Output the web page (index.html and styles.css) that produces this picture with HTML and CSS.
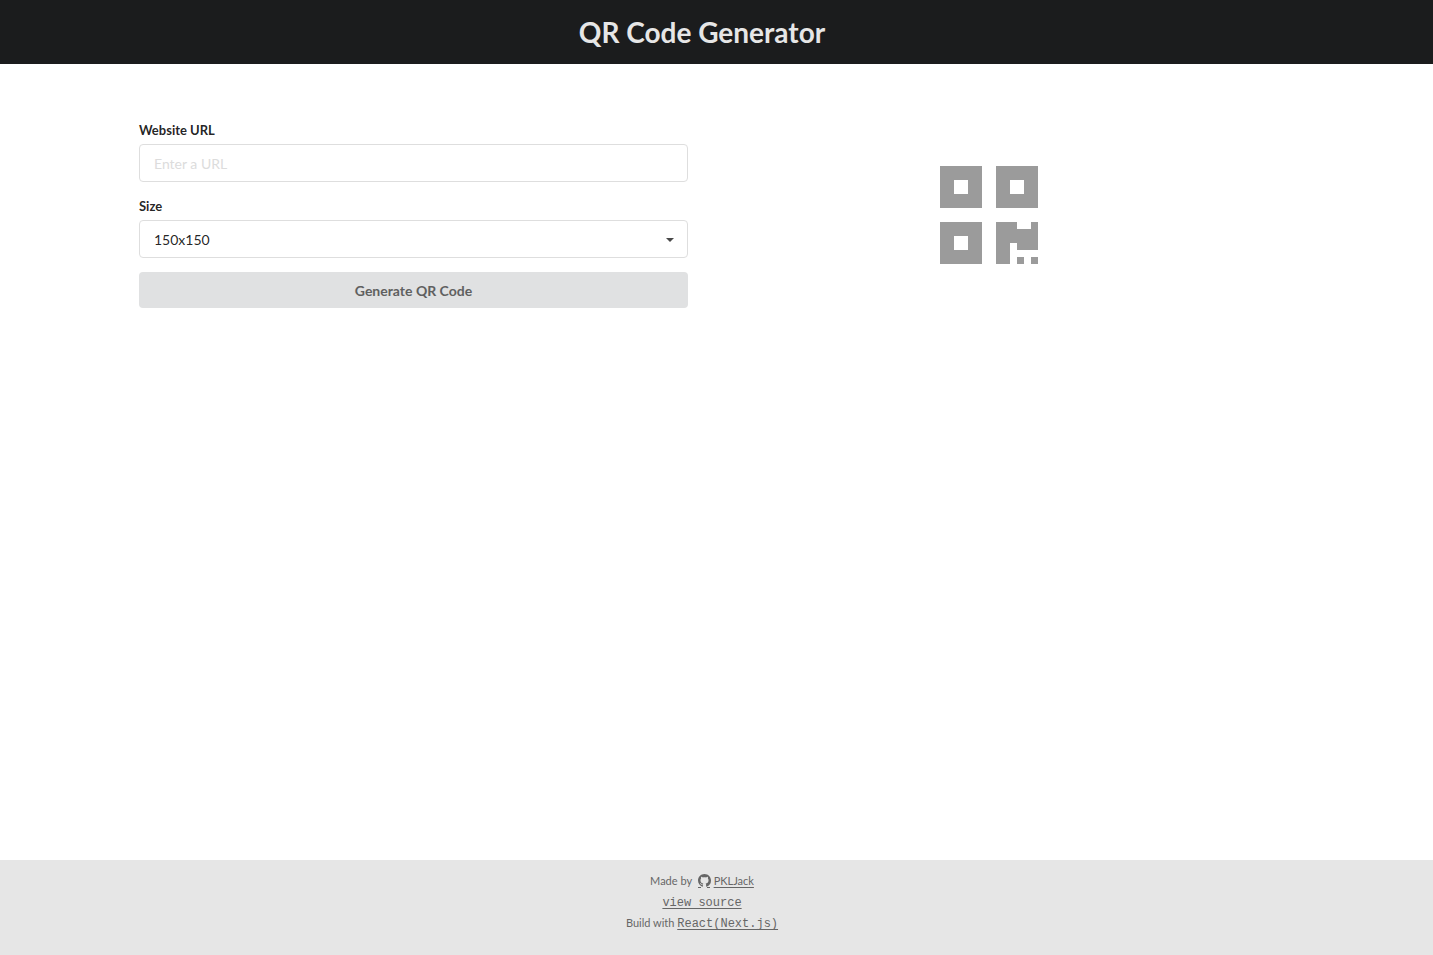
FILE: index.html
```html
<!DOCTYPE html>
<html lang="en">
<head>
<meta charset="utf-8">
<title>QR Code Generator</title>
<link rel="stylesheet" href="styles.css">
</head>
<body>
<header class="header"><h1 class="title">QR Code Generator</h1></header>
<main class="main">
  <form class="form">
    <div class="field">
      <label class="label" for="url">Website URL</label>
      <input class="control" id="url" type="text" placeholder="Enter a URL">
    </div>
    <div class="field">
      <label class="label" for="size">Size</label>
      <div class="select-box">
        <select class="control select" id="size">
          <option>150x150</option>
          <option>200x200</option>
          <option>300x300</option>
        </select>
        <svg class="caret" viewBox="0 0 8 4" aria-hidden="true"><path d="M0 0h8L4 4z"/></svg>
      </div>
    </div>
    <button class="button" type="button">Generate QR Code</button>
  </form>
  <div class="preview">
    <svg class="qr" viewBox="0 0 14 14" role="img" aria-label="QR code" shape-rendering="crispEdges">
      <path fill-rule="evenodd" d="M0 0h6v6H0zM2 2v2h2V2zM8 0h6v6H8zM10 2v2h2V2zM0 8h6v6H0zM2 10v2h2v-2zM8 8h3v1h2V8h1v4h-3v-1h-1v3H8zM11 13h1v1h-1zM13 13h1v1h-1z"/>
    </svg>
  </div>
</main>
<footer class="footer">
  <p class="line">Made by
    <a class="github" href="#github" aria-label="GitHub"><svg class="github-icon" viewBox="0 0 13 14" aria-hidden="true"><path d="M6.500 0C2.900 0 0 2.900 0 6.500c0 2.850 1.850 5.250 4.400 6.150.350.050.45-.15.45-.35v-1.500c-1.600.3-2.100-.4-2.300-.9-.2-.4-.4-.7-.7-.9.9-.1 1.300.6 1.600 1 .4.500.9.500 1.500.3.050-.4.200-.7.400-.9-1.400-.15-2.900-.7-2.900-3.150 0-.7.250-1.300.65-1.750-.2-.6-.1-1.200.1-1.700.6 0 1.200.3 1.750.65 1-.25 2.100-.25 3.100 0 .55-.35 1.150-.65 1.750-.65.2.5.3 1.100.1 1.700.4.450.65 1.050.65 1.750 0 2.450-1.500 3-2.900 3.150.250.200.450.600.450 1.200v1.700c0 .2.100.4.450.35A6.500 6.500 0 0 0 13 6.500C13 2.900 10.100 0 6.500 0zM0 13h3v1H0zM9 13h3v1H9z"/></svg></a><a class="link" href="#author">PKLJack</a></p>
  <p class="line"><a class="link mono" href="#source">view source</a></p>
  <p class="line">Build with <a class="link mono" href="#next">React(Next.js)</a></p>
</footer>
</body>
</html>
```
FILE: styles.css
```css
* { box-sizing: border-box; }
body {
  margin: 0;
  min-height: 100vh;
  display: flex;
  flex-direction: column;
  font-family: Lato, "Liberation Sans", sans-serif;
  font-size: 14px;
  line-height: 20px;
  color: rgba(0, 0, 0, .87);
  background: #fff;
}
.header {
  height: 64px;
  padding-right: 29px;
  display: flex;
  align-items: center;
  justify-content: center;
  background: #1b1c1d;
}
.title {
  margin: 0;
  font-size: 28px;
  line-height: 36px;
  font-weight: 700;
  color: #e6e6e6;
}
.main {
  flex: 1;
  display: grid;
  grid-template-columns: 1fr 1fr;
  grid-template-rows: min-content;
  column-gap: 28px;
  width: 100%;
  max-width: 1433px;
  margin: 0 auto;
  padding: 56px 168px 28px 139px;
}
.field { margin-bottom: 14px; }
.label {
  display: block;
  padding-bottom: 4px;
  font-size: 13px;
  line-height: 20px;
  font-weight: 700;
}
.control {
  display: block;
  width: 100%;
  height: 38px;
  margin: 0;
  padding: 0 14px;
  font: inherit;
  color: rgba(0, 0, 0, .87);
  background: #fff;
  border: 1px solid #dedede;
  border-radius: 4px;
}
.control::placeholder { color: #dcdcdc; opacity: 1; }
.select { appearance: none; padding-top: 1px; }
.select-box { position: relative; }
.caret {
  position: absolute;
  top: 18px;
  right: 14px;
  width: 8px;
  height: 4px;
  fill: #484848;
  pointer-events: none;
}
.button {
  display: block;
  width: 100%;
  height: 36px;
  padding: 2px 14px 0;
  border: 0;
  border-radius: 4px;
  font: inherit;
  font-weight: 700;
  color: #5f6060;
  background: #e0e1e2;
}
.preview {
  display: flex;
  align-items: center;
  justify-content: center;
  padding: 2px 4px 0 0;
}
.qr { width: 98px; height: 98px; fill: #9b9b9b; }
.footer {
  min-height: 95px;
  padding: 10px 29px 20px 0;
  text-align: center;
  font-size: 11px;
  color: #666;
  background: #e6e6e6;
}
.line { margin: 0; line-height: 21px; }
.link { color: #666; text-decoration: underline; text-underline-offset: 2px; }
.mono { font-family: "Courier New", "Liberation Mono", monospace; font-size: 12px; line-height: 12px; }
.github { margin: 0 3px; line-height: 12px; }
.github-icon { width: 13px; height: 14px; fill: #666; vertical-align: -3px; }
```
